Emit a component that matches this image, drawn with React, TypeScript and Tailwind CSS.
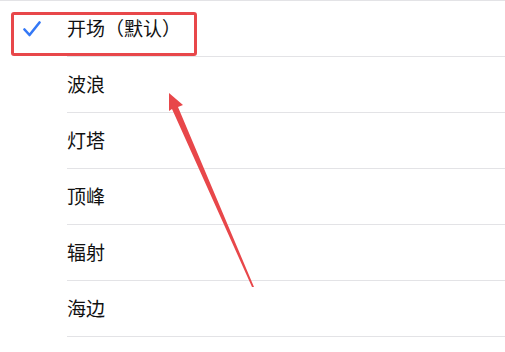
import React from "react";

const items = ["开场（默认）", "波浪", "灯塔", "顶峰", "辐射", "海边"];

export default function App() {
  return (
    <div
      className="relative w-[505px] h-[352px] overflow-hidden bg-white border-t border-[#e3e3e6]"
      style={{ fontFamily: '"Noto Sans CJK SC", "Noto Sans", sans-serif' }}
    >
      <div className="flex flex-col">
        {items.map((t, i) => (
          <div key={t} className="flex h-[56px]">
            <div className="w-[67px] flex items-center justify-center">
              {i === 0 && (
                <svg width="18" height="16" viewBox="0 0 18 16" className="ml-[-3px]">
                  <path d="M1.5 8.5 L6.5 14 L16.5 1.5" fill="none" stroke="#3478f6" strokeWidth="2.6" strokeLinecap="round" strokeLinejoin="round" />
                </svg>
              )}
            </div>
            <div className="flex-1 flex items-center border-b border-[#e3e3e6] text-[19px] leading-none text-[#111111] pb-[2px]">
              {t}
            </div>
          </div>
        ))}
      </div>
      <div className="absolute left-[11px] top-[11px] w-[186px] h-[44px] border-[3px] border-[#e8474a] rounded-[3px]" />
      <svg className="absolute left-0 top-0" width="505" height="352" viewBox="0 0 505 352">
        <polygon points="169,92 183,104 178,106 254,286 252,286 172,108 169,110" fill="#e8474a" />
      </svg>
    </div>
  );
}
